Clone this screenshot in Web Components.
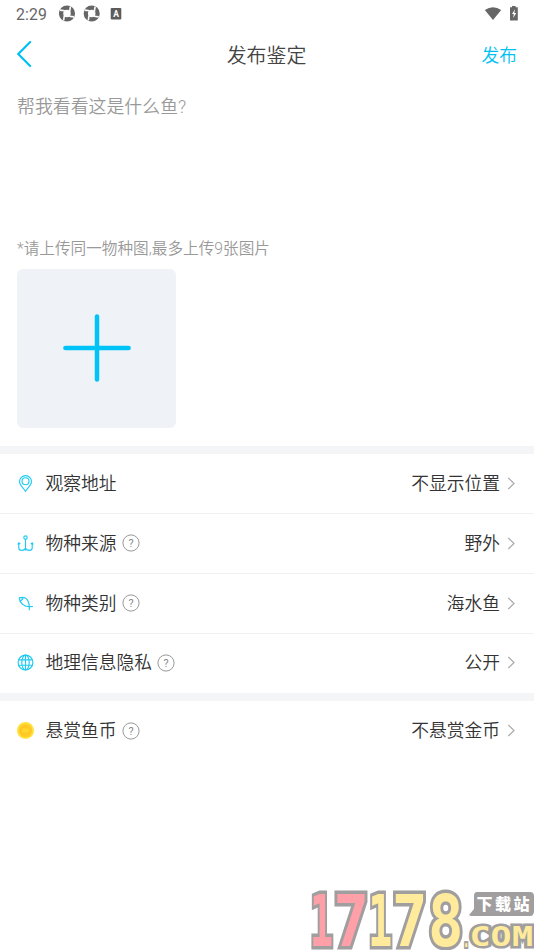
<!DOCTYPE html>
<html lang="zh-CN">
<head>
<meta charset="utf-8">
<title>发布鉴定</title>
<style>
html,body{margin:0;background:#fff}
body{height:950px;overflow:hidden;font-family:Roboto,"Noto Sans CJK SC",sans-serif}
</style>
</head>
<body>
<publish-page></publish-page>
<script>
const define=(name,html)=>customElements.define(name,class extends HTMLElement{
  constructor(){super();this.attachShadow({mode:'open'}).innerHTML=html;}
});

define('status-bar',`<style>
:host{display:flex;height:27px;align-items:center;box-sizing:border-box;padding:0 14px 0 16px;color:#666;font-size:15.8px;line-height:27px}
.time{width:43px;letter-spacing:.1px;padding-top:1px}.sp{flex:1}svg{display:block}
</style><span class="time">2:29</span>
<svg width="66" height="18" viewBox="0 0 66 18"><defs><g id="s"><circle cx="8" cy="8" r="5.9" fill="none" stroke="#666" stroke-width="4.3"/><path d="M5.8 5.3L1 4.6M10.7 5.8L11.4 1M10.2 10.7L15 11.4M5.3 10.2L4.6 15" stroke="#fff" stroke-width="1.6"/></g></defs>
<use href="#s" y=".5"/><use href="#s" x="24.7" y=".5"/><rect x="51.7" y="3" width="10.6" height="11.6" rx="1" fill="#5c5c5c"/><text x="57" y="11.6" font-size="8.5" font-weight="700" text-anchor="middle" fill="#fff">A</text></svg>
<span class="sp"></span>
<svg width="36" height="20" viewBox="0 0 36 20"><path d="M.8 6Q9 .4 17.2 6L9 16z" fill="#666"/><path d="M26 3.2h2V2h3.6v1.2h2.2v13.3H26z" fill="#666"/><path d="M31 5.2l-3 4.8h1.8l-.6 4 3-5h-1.9z" fill="#fff"/></svg>`);

define('title-bar',`<style>
:host{display:grid;grid-template-columns:100px 1fr 100px;height:55px;align-items:center;box-sizing:border-box;padding:0 17px;color:#444}
svg{display:block;margin-bottom:2px}.t{font-size:19.9px;font-weight:350;text-align:center;line-height:57px;height:55px;margin-left:-1px}.a{font-size:17.8px;font-weight:350;text-align:right;color:#00bff3;line-height:58px;height:56px}
</style><svg width="16" height="28" viewBox="0 0 16 28"><path d="M13.2 2L1.3 14l11.9 12" fill="none" stroke="#00bff3" stroke-width="2.1" stroke-linecap="round"/></svg>
<div class="t"><slot></slot></div><div class="a"><slot name="action"></slot></div>`);

define('post-editor',`<style>
:host{display:block;height:363.5px;box-sizing:border-box;padding:11px 17px 0;color:#999;font-weight:350}
.q{height:142px;font-size:17.9px;line-height:27px}.h{font-size:15.65px;line-height:27px;height:34px}
.box{width:159px;height:159px;border-radius:6px;background:#eff3f7;display:grid;place-items:center}svg{display:block;margin:0 0 1px 0}
</style><div class="q"><slot></slot></div><div class="h"><slot name="hint"></slot></div>
<div class="box"><svg width="68" height="68" viewBox="0 0 68 68"><path d="M34 2.4v63.2M2.4 34h63.2" stroke="#00c3f8" stroke-width="4.5" stroke-linecap="round"/></svg></div>`);

define('help-mark',`<style>:host{display:block;width:18px;height:18px;margin-left:5px}svg{display:block}</style>
<svg width="18" height="18" viewBox="0 0 18 18"><circle cx="9" cy="9" r="8.1" fill="none" stroke="#999" stroke-width="1"/><text x="9" y="12.8" text-anchor="middle" font-size="10.8" font-weight="400" fill="#888">?</text></svg>`);

define('section-band',`<style>:host{display:block;height:8px;background:#f4f5f7}</style>`);

const icons={
pin:'<path d="M8.5 16.3C6 12.8 2.5 10 2.5 6.6a6 6 0 0 1 12 0c0 3.4-3.5 6.2-6 9.7z"/><circle cx="8.5" cy="6.2" r="3.5"/>',
anchor:'<circle cx="8.5" cy="2.6" r="1.7"/><path d="M8.5 4.3v11.2M1.8 8v4.7q0 2.6 2.7 2.6 2.8 0 4-1.9 1.2 1.9 4 1.9 2.7 0 2.7-2.6V8M.7 9.5l1.1-1.7L3.3 9M13.7 9l1.5-1.2 1.1 1.7"/>',
fish:'<path d="M2.3 2.9Q8.5 1.1 11 5.9q1.2 2.8 1.3 5.7Q8 11.8 5.5 9.2 2.3 6.3 2.3 2.9zM5.7 2.5Q5.9 4.8 3.1 6M12.3 11.6l3.7-.1M12.3 11.6v3.6"/>',
globe:'<circle cx="8.5" cy="8.5" r="7.4"/><ellipse cx="8.5" cy="8.5" rx="3.7" ry="7.4"/><path d="M8.5 1.1v14.8M1.6 5.8h13.8M1.6 11.2h13.8"/>',
coin:'<circle cx="8.5" cy="8.5" r="8.5" fill="#ffe138" stroke="none"/><circle cx="8.5" cy="8.5" r="6.6" fill="#ffc928" stroke="none"/><path d="M3.5 9.7Q5.3 4.5 8.2 6q3-1.8 5.1 2.2-1.6 3.5-5 3.2-2.9.2-4.8-1.7z" fill="#ffd62f" stroke="#f9bd1f" stroke-width=".6"/>'
};
customElements.define('setting-row',class extends HTMLElement{
  connectedCallback(){
    if(this.shadowRoot)return;
    this.attachShadow({mode:'open'}).innerHTML=`<style>
:host{display:flex;align-items:center;height:60px;box-sizing:border-box;border-bottom:1px solid #f0f1f3;padding:0 17px;color:#333;font-weight:350;font-size:17.75px;line-height:60px}
:host([last]){border-bottom-color:transparent}
:host([last][icon=globe]){height:59.5px}
svg{display:block}.label{margin-left:11.5px;height:59px}.value{margin-left:auto;margin-right:7px;height:59px}
</style><svg width="17" height="17" viewBox="0 0 17 17" fill="none" stroke="#20caf2" stroke-width="1.15">${icons[this.getAttribute('icon')]}</svg>
<span class="label"><slot></slot></span>${this.hasAttribute('help')?'<help-mark></help-mark>':''}
<span class="value"><slot name="value"></slot></span>
<svg width="10" height="13" viewBox="0 0 10 13"><path d="M1.3 1L7 6.5 1.3 12" fill="none" stroke="#aaa" stroke-width="1.2"/></svg>`;
  }
});

define('site-mark',`<style>
:host{position:absolute;right:0;bottom:0;width:226px;height:62px;display:block}svg{display:block;overflow:hidden}
.n{font:700 71px "DejaVu Sans Mono",monospace}.c{font:700 27px "DejaVu Sans Mono",monospace}
text{stroke:#a09e9e;paint-order:stroke;stroke-linejoin:miter}
</style><svg width="226" height="62" viewBox="0 0 226 62">
<g class="n" stroke-width="7">
<text transform="translate(1.8 57.5) scale(.55 1)" fill="#ff9fa7">1</text>
<text transform="translate(25.5 57.5) scale(.83 1)" fill="#ff9fa7">7</text>
<text transform="translate(60 57.5) scale(.57 1)" fill="#ffeb9b">1</text>
<text transform="translate(84 57.5) scale(.83 1)" fill="#ffeb9b">7</text>
<text transform="translate(120 57.5) scale(.83 1)" fill="#ffeb9b">8</text></g>
<path d="M169 4h53q4 0 4 4v15q0 5-4 5h-59l-2-1 5-6V8q0-4 3-4z" fill="#a09e9e"/>
<text x="168.5" y="21.5" font-family="Noto Sans CJK SC" font-weight="900" font-size="16" textLength="53" lengthAdjust="spacing" style="fill:#fff;stroke:none">下载站</text>
<g class="c" fill="#ffeb9b" stroke-width="5"><text transform="translate(154.5 59) scale(.45 .8)">.</text>
<text transform="translate(161.5 58) scale(1.3 1)">C</text><text transform="translate(182.5 58) scale(1.3 1)">O</text><text transform="translate(204 58) scale(1.3 1)">M</text></g>
</svg>`);

define('publish-page',`<style>:host{display:block;position:relative;width:534px;height:950px;background:#fff;overflow:hidden}</style>
<status-bar></status-bar>
<title-bar>发布鉴定<span slot="action">发布</span></title-bar>
<post-editor>帮我看看这是什么鱼?<span slot="hint">*请上传同一物种图,最多上传9张图片</span></post-editor>
<section-band></section-band>
<setting-row icon="pin">观察地址<span slot="value">不显示位置</span></setting-row>
<setting-row icon="anchor" help>物种来源<span slot="value">野外</span></setting-row>
<setting-row icon="fish" help>物种类别<span slot="value">海水鱼</span></setting-row>
<setting-row icon="globe" help last>地理信息隐私<span slot="value">公开</span></setting-row>
<section-band></section-band>
<setting-row icon="coin" help last>悬赏鱼币<span slot="value">不悬赏金币</span></setting-row>
<site-mark></site-mark>`);
</script>
</body>
</html>
